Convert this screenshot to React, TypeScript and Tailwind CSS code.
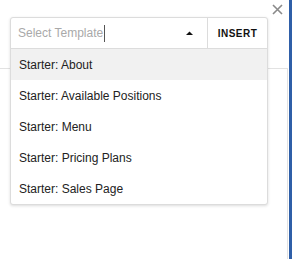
import React from "react";

const items = [
  "Starter: About",
  "Starter: Available Positions",
  "Starter: Menu",
  "Starter: Pricing Plans",
  "Starter: Sales Page",
];

export default function App() {
  return (
    <div
      className="relative w-[292px] h-[259px] bg-white flex overflow-hidden"
      style={{ fontFamily: '"Liberation Sans", Arial, sans-serif' }}
    >
      <div className="flex-1 flex flex-col">
        <div className="h-[68px] flex justify-end pr-[6px] pt-[4px]">
          <svg width="11" height="11" viewBox="0 0 11 11">
            <path d="M1 1 L10 10 M10 1 L1 10" stroke="#8a8a8a" strokeWidth="1.6" />
          </svg>
        </div>
        <div className="flex-1 border-t border-r border-[#e2e2e2] mr-[1px]"></div>
      </div>
      <div className="w-[3px] bg-[#2f5fa8]"></div>

      <div className="absolute left-[10px] top-[17px] w-[258px] bg-white border border-[#dcdcdc] rounded-[3px] shadow-[0_1px_3px_rgba(0,0,0,0.14)]">
        <div className="flex h-[31px] border-b border-[#dcdcdc]">
          <div className="flex-1 flex items-center pl-[7px] pr-[12px]">
            <span className="text-[12px] text-[#a9a9a9]">Select Template</span>
            <span className="ml-[1px] w-px h-[17px] bg-[#555]"></span>
            <span className="flex-1"></span>
            <svg width="7" height="4" viewBox="0 0 7 4" className="mr-[2px]">
              <path d="M0 4 L3.5 0.5 L7 4 Z" fill="#111" />
            </svg>
          </div>
          <div className="w-[60px] border-l border-[#dcdcdc] flex items-center justify-center">
            <span className="text-[10px] font-bold tracking-[0.5px] text-[#111]">INSERT</span>
          </div>
        </div>
        {items.map((t, i) => (
          <div
            key={t}
            className={`h-[31px] flex items-center pl-[8px] text-[12px] text-[#222] ${
              i === 0 ? "bg-[#f1f1f1]" : ""
            }`}
          >
            {t}
          </div>
        ))}
      </div>
    </div>
  );
}
